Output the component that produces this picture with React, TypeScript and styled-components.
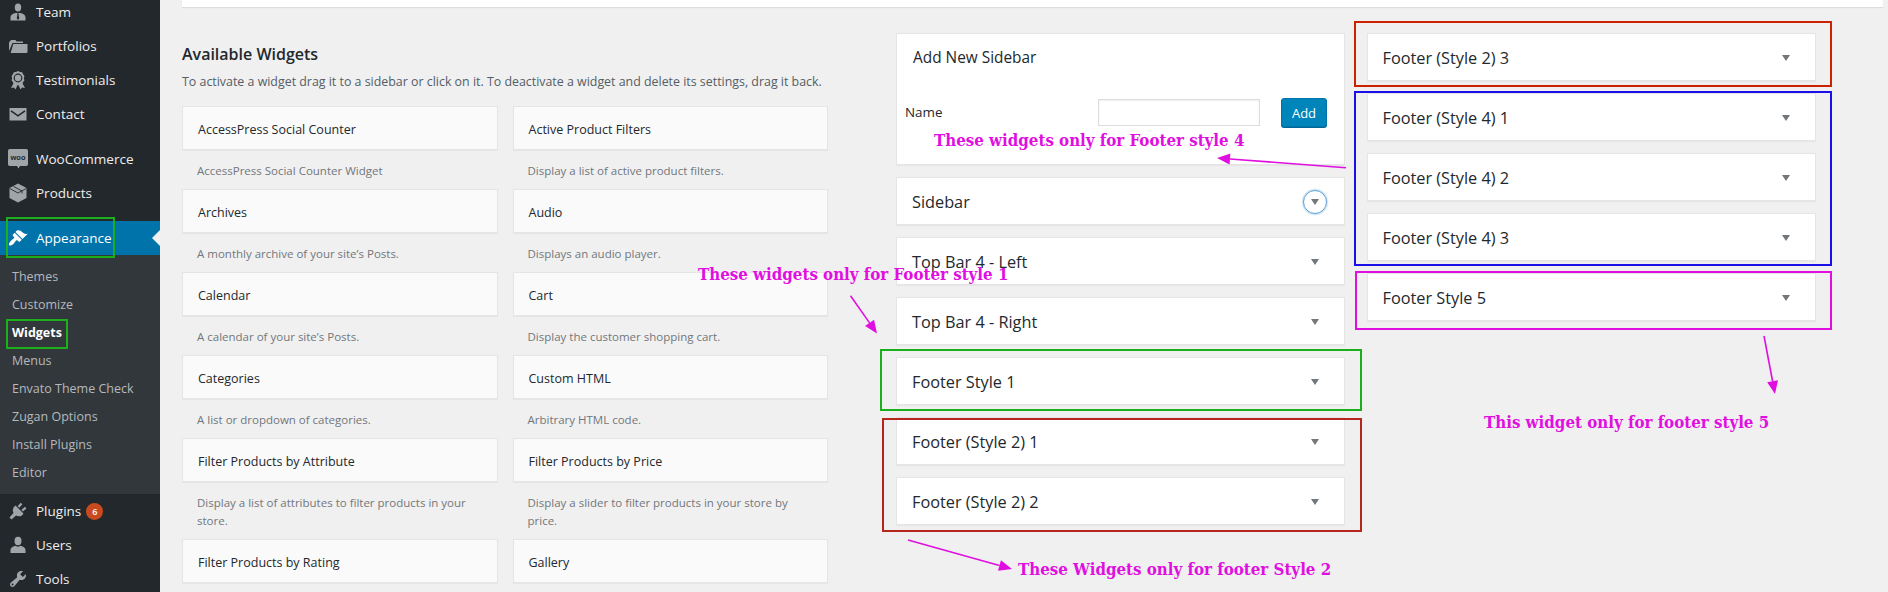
import React from "react";
import styled, { createGlobalStyle } from "styled-components";

const Global = createGlobalStyle`
  html, body { margin: 0; padding: 0; background: #f0f0f0; }
  * { box-sizing: border-box; }
`;

const Page = styled.div`
  position: relative;
  display: flex;
  width: 1888px;
  height: 592px;
  overflow: hidden;
  background: #f0f0f0;
  font-family: "Open Sans", "Liberation Sans", sans-serif;
  color: #23282d;
`;

/* ---------- admin menu ---------- */
const AdminMenu = styled.nav`
  flex: none;
  width: 160px;
  height: 592px;
  background: #23282d;
`;
const MenuGroup = styled.div<{ $offset?: number; $gap?: number }>`
  margin-top: ${(p) => p.$offset ?? 0}px;
  margin-bottom: ${(p) => p.$gap ?? 0}px;
`;
const MenuItem = styled.div<{ $active?: boolean }>`
  position: relative;
  display: flex;
  align-items: center;
  height: 34px;
  padding-left: 8px;
  font-size: 13.5px;
  color: ${(p) => (p.$active ? "#fff" : "#eee")};
  background: ${(p) => (p.$active ? "#0073aa" : "transparent")};
  ${(p) =>
    p.$active &&
    `&::after {
      content: "";
      position: absolute;
      right: 0;
      top: 50%;
      margin-top: -8px;
      border: 8px solid transparent;
      border-right-color: #f1f1f1;
      border-left-width: 0;
    }`}
`;
const MenuIcon = styled.svg<{ $active?: boolean }>`
  flex: none;
  width: 20px;
  height: 20px;
  margin-right: 8px;
  fill: ${(p) => (p.$active ? "#fff" : "#a0a5aa")};
`;
const Badge = styled.span`
  display: inline-flex;
  align-items: center;
  justify-content: center;
  width: 17px;
  height: 17px;
  margin-left: 5px;
  border-radius: 50%;
  background: #ca4a1f;
  color: #fff;
  font-size: 9px;
  font-weight: 600;
`;
const SubMenu = styled.div`
  padding: 8px 0 7px;
  background: #32373c;
`;
const SubItem = styled.div<{ $current?: boolean }>`
  height: 28px;
  padding-left: 12px;
  font-size: 12.5px;
  line-height: 27px;
  color: ${(p) => (p.$current ? "#fff" : "#b4b9be")};
  font-weight: ${(p) => (p.$current ? 700 : 400)};
`;

/* ---------- main ---------- */
const Main = styled.main`
  flex: 1;
  min-width: 0;
  padding: 0 5px 0 22px;
`;
const TopBar = styled.div`
  height: 7px;
  background: #fff;
  box-shadow: 0 1px 1px rgba(0, 0, 0, 0.08);
`;
const Columns = styled.div`
  display: flex;
  align-items: flex-start;
  margin-top: 26px;
`;
const Available = styled.section`
  flex: none;
  width: 646px;
  margin-right: 68px;
  padding-top: 9px;
`;
const Heading = styled.h2`
  margin: 0;
  font-size: 16px;
  font-weight: 600;
  line-height: 24px;
  color: #23282d;
`;
const Intro = styled.p`
  margin: 7px 0 0;
  font-size: 12.4px;
  line-height: 18px;
  white-space: nowrap;
  color: #555d66;
`;
const WidgetGrid = styled.div`
  display: grid;
  grid-template-columns: 1fr 1fr;
  column-gap: 15px;
  margin-top: 15px;
`;
const WidgetCell = styled.div``;
const WidgetCard = styled.div`
  height: 44px;
  padding: 0 15px;
  border: 1px solid #e5e5e5;
  background: #fafafa;
  box-shadow: 0 1px 1px rgba(0, 0, 0, 0.04);
  font-size: 12.5px;
  font-weight: 500;
  line-height: 45px;
  color: #23282d;
`;
const WidgetDesc = styled.p`
  margin: 0;
  padding: 12px 15px 9px;
  font-size: 11.5px;
  line-height: 18px;
  color: #72777c;
`;

const SidebarColumn = styled.section<{ $gap?: number }>`
  flex: none;
  display: flex;
  flex-direction: column;
  gap: 12px;
  width: 449px;
  margin-right: ${(p) => p.$gap ?? 0}px;
`;
const Card = styled.div`
  border: 1px solid #e5e5e5;
  background: #fff;
  box-shadow: 0 1px 1px rgba(0, 0, 0, 0.04);
`;
const AddCard = styled(Card)`
  height: 132px;
  padding-top: 13px;
`;
const AddTitle = styled.h3`
  margin: 0;
  padding-left: 16px;
  font-size: 15.4px;
  font-weight: 500;
  line-height: 22px;
`;
const AddForm = styled.div`
  display: flex;
  align-items: center;
  margin-top: 29px;
  padding: 0 17px 0 8px;
`;
const NameLabel = styled.label`
  flex: 1;
  padding-bottom: 2px;
  font-size: 13.4px;
  font-weight: 500;
`;
const NameInput = styled.input`
  width: 162px;
  height: 27px;
  padding: 0;
  border: 1px solid #ddd;
  background: #fff;
  box-shadow: inset 0 1px 2px rgba(0, 0, 0, 0.07);
`;
const AddButton = styled.button`
  width: 46px;
  height: 29px;
  margin-left: 21px;
  padding: 0;
  border: 1px solid #0073aa;
  border-radius: 3px;
  background: #0085ba;
  box-shadow: 0 1px 0 #006799;
  color: #fff;
  font-family: inherit;
  font-size: 13px;
`;
const SidebarCard = styled(Card)`
  display: flex;
  align-items: center;
  justify-content: space-between;
  height: 48px;
  padding: 1px 17px 0 15px;
`;
const SidebarTitle = styled.span`
  font-size: 16.3px;
  font-weight: 500;
`;
const Toggle = styled.span<{ $focus?: boolean }>`
  display: flex;
  align-items: center;
  justify-content: center;
  width: 24px;
  height: 24px;
  border-radius: 50%;
  border: ${(p) => (p.$focus ? "1px solid #5b9dd9" : "1px solid transparent")};
  box-shadow: ${(p) => (p.$focus ? "0 0 2px rgba(30, 140, 190, 0.8)" : "none")};
  &::before {
    content: "";
    border-style: solid;
    border-width: 6px 4px 0;
    border-color: #72777c transparent transparent;
  }
`;

/* ---------- annotations ---------- */
const Frame = styled.div<{ $x: number; $y: number; $w: number; $h: number; $c: string }>`
  position: absolute;
  left: ${(p) => p.$x}px;
  top: ${(p) => p.$y}px;
  width: ${(p) => p.$w}px;
  height: ${(p) => p.$h}px;
  border: 2px solid ${(p) => p.$c};
  pointer-events: none;
`;
const Note = styled.div<{ $x: number; $y: number }>`
  position: absolute;
  left: ${(p) => p.$x}px;
  top: ${(p) => p.$y}px;
  font-family: "DejaVu Serif Condensed", "DejaVu Serif", "Liberation Serif", serif;
  font-stretch: condensed;
  font-size: 16.75px;
  font-weight: 700;
  line-height: 22px;
  white-space: nowrap;
  color: #e00fe0;
`;
const ArrowLayer = styled.svg`
  position: absolute;
  left: 0;
  top: 0;
  width: 1888px;
  height: 592px;
  pointer-events: none;
`;

const dark = "#23282d";
const icons: Record<string, React.ReactNode> = {
  team: (
    <>
      <ellipse cx="10" cy="5.5" rx="3.2" ry="4" />
      <path d="M2.5 18.5v-3.2c0-2.6 2.6-3.9 5.2-4.4L10 11l2.3-.1c2.6.5 5.2 1.8 5.2 4.4v3.2H2.5z" />
      <path d="M9 11.5h2l-.4 1.6.7 3.2L10 18l-1.3-1.7.7-3.2z" fill={dark} />
    </>
  ),
  portfolio: (
    <>
      <path d="M1 15V6.500l2-2.500h4.500l1 1.500H15V7H4.500z" />
      <path d="M2.600 17 5.300 8H19.500v8.200l-.8.8z" />
    </>
  ),
  award: (
    <>
      <path d="M6 12.500 3 18l3-.6 1.600 2.200L9.400 15zM14 12.500 17 18l-3-.6-1.600 2.200L10.600 15z" />
      <path
        fillRule="evenodd"
        d="M10 1l2 1 2.200.3.9 2 1.300 1.700-.5 2.200.5 2.200-1.300 1.700-.9 2-2.200.3-2 1-2-1-2.200-.3-.9-2-1.300-1.700.5-2.200-.5-2.200 1.300-1.700.9-2L8 2zM10 3.600a4.400 4.400 0 1 0 0 8.800 4.400 4.400 0 0 0 0-8.800z"
      />
      <circle cx="10" cy="8" r="3.2" />
    </>
  ),
  mail: (
    <>
      <rect x="1.500" y="4" width="17" height="12.500" />
      <path d="M3 6.800l7 5 7-5" fill="none" stroke={dark} strokeWidth="1.600" />
    </>
  ),
  woo: (
    <>
      <path d="M1.800 0h16.400A1.800 1.800 0 0 1 20 1.800v13.400a1.800 1.800 0 0 1-1.800 1.800H12l-1.500 2.500L9 17H1.800A1.800 1.800 0 0 1 0 15.200V1.800A1.800 1.800 0 0 1 1.800 0z" />
      <text x="10" y="11" textAnchor="middle" fontSize="7.500" fontWeight="700" fontFamily="'Liberation Sans', sans-serif" fill={dark}>
        woo
      </text>
    </>
  ),
  box: (
    <>
      <path d="M10 .5 18.500 5v10L10 19.500 1.500 15V5z" />
      <path d="M1.800 5.500 10 10l8.200-4.500M5.500 3.400 14 8v2.500" fill="none" stroke={dark} strokeWidth=".9" />
    </>
  ),
  brush: (
    <>
      <path d="M14.480 11.060L7.410 3.990l1.500-1.500c.5-.56 2.300-.47 3.510.32 1.210.8 1.430 1.280 2.910 2.100 1.180.64 2.450 1.260 4.450.85z" />
      <path d="M13.770 11.770L6.700 4.700 4.930 6.470c-.39.39-.39 1.020 0 1.410l1.060 1.060c.39.39.39 1.030 0 1.420-.6.6-1.430 1.110-2.210 1.690-.35.26-.7.53-1.010.84C1.400 14.300.3 16.300 1.200 17.300c1 .9 3-.3 4.380-1.600.32-.3.57-.65.84-1.010.58-.78 1.090-1.610 1.690-2.210.39-.39 1.030-.39 1.420 0l1.060 1.060c.39.39 1.020.39 1.410 0z" />
    </>
  ),
  plug: (
    <>
      <path d="M7.500 4.500l8 8c-1.500 3-5 3.500-7.500 2L3.500 18.500l-2-2 4-4.500C4 9.500 5 6.500 7.500 4.500z" />
      <path d="M10.500 6 13.500 2.500M14.200 9.700 17.700 6.700" stroke="#a0a5aa" strokeWidth="2.200" fill="none" />
    </>
  ),
  user: (
    <>
      <ellipse cx="10" cy="6" rx="3.500" ry="4.200" />
      <path d="M2.500 18v-3c0-2.500 3.300-4 5.300-4.300.6.7 1.400 1 2.200 1s1.600-.3 2.200-1c2 .3 5.300 1.800 5.300 4.300v3z" />
    </>
  ),
  wrench: (
    <path
      fillRule="evenodd"
      d="M16.680 9.770c-1.340 1.340-3.300 1.670-4.950.99l-5.410 6.520c-.99.99-2.590.99-3.580 0s-.99-2.590 0-3.570l6.520-5.420c-.68-1.650-.35-3.610.99-4.950 1.280-1.280 3.120-1.620 4.720-1.060l-2.890 2.890 2.820 2.820 2.860-2.870c.53 1.580.18 3.390-1.080 4.650zM3.810 16.210c.4.39 1.040.39 1.430 0 .4-.4.4-1.040 0-1.430-.39-.4-1.030-.4-1.430 0-.39.39-.39 1.030 0 1.430z"
    />
  ),
};

const Item = ({ icon, label, active, badge }: { icon: string; label: string; active?: boolean; badge?: string }) => (
  <MenuItem $active={active}>
    <MenuIcon viewBox="0 0 20 20" $active={active}>
      {icons[icon]}
    </MenuIcon>
    {label}
    {badge && <Badge>{badge}</Badge>}
  </MenuItem>
);

const subs = ["Themes", "Customize", "Widgets", "Menus", "Envato Theme Check", "Zugan Options", "Install Plugins", "Editor"];

const widgets: [string, string][] = [
  ["AccessPress Social Counter", "AccessPress Social Counter Widget"],
  ["Active Product Filters", "Display a list of active product filters."],
  ["Archives", "A monthly archive of your site’s Posts."],
  ["Audio", "Displays an audio player."],
  ["Calendar", "A calendar of your site’s Posts."],
  ["Cart", "Display the customer shopping cart."],
  ["Categories", "A list or dropdown of categories."],
  ["Custom HTML", "Arbitrary HTML code."],
  ["Filter Products by Attribute", "Display a list of attributes to filter products in your store."],
  ["Filter Products by Price", "Display a slider to filter products in your store by price."],
  ["Filter Products by Rating", ""],
  ["Gallery", ""],
];

const firstColumn = ["Sidebar", "Top Bar 4 - Left", "Top Bar 4 - Right", "Footer Style 1", "Footer (Style 2) 1", "Footer (Style 2) 2"];
const secondColumn = ["Footer (Style 2) 3", "Footer (Style 4) 1", "Footer (Style 4) 2", "Footer (Style 4) 3", "Footer Style 5"];

const magenta = "#e00fe0";
const Arrow = ({ x1, y1, x2, y2 }: { x1: number; y1: number; x2: number; y2: number }) => {
  const a = Math.atan2(y2 - y1, x2 - x1);
  const len = 13;
  const w = 5.5;
  const bx = x2 - len * Math.cos(a);
  const by = y2 - len * Math.sin(a);
  const nx = -Math.sin(a) * w;
  const ny = Math.cos(a) * w;
  return (
    <>
      <line x1={x1} y1={y1} x2={bx} y2={by} stroke={magenta} strokeWidth="1.6" />
      <polygon points={`${x2},${y2} ${bx + nx},${by + ny} ${bx - nx},${by - ny}`} fill={magenta} />
    </>
  );
};

export default function App() {
  return (
    <Page>
      <Global />
      <AdminMenu>
        <MenuGroup $offset={-5} $gap={11}>
          <Item icon="team" label="Team" />
          <Item icon="portfolio" label="Portfolios" />
          <Item icon="award" label="Testimonials" />
          <Item icon="mail" label="Contact" />
        </MenuGroup>
        <MenuGroup $gap={11}>
          <Item icon="woo" label="WooCommerce" />
          <Item icon="box" label="Products" />
        </MenuGroup>
        <MenuGroup>
          <Item icon="brush" label="Appearance" active />
          <SubMenu>
            {subs.map((s) => (
              <SubItem key={s} $current={s === "Widgets"}>
                {s}
              </SubItem>
            ))}
          </SubMenu>
          <Item icon="plug" label="Plugins" badge="6" />
          <Item icon="user" label="Users" />
          <Item icon="wrench" label="Tools" />
        </MenuGroup>
      </AdminMenu>

      <Main>
        <TopBar />
        <Columns>
          <Available>
            <Heading>Available Widgets</Heading>
            <Intro>To activate a widget drag it to a sidebar or click on it. To deactivate a widget and delete its settings, drag it back.</Intro>
            <WidgetGrid>
              {widgets.map(([title, desc]) => (
                <WidgetCell key={title}>
                  <WidgetCard>{title}</WidgetCard>
                  <WidgetDesc>{desc}</WidgetDesc>
                </WidgetCell>
              ))}
            </WidgetGrid>
          </Available>

          <SidebarColumn $gap={21.5}>
            <AddCard>
              <AddTitle>Add New Sidebar</AddTitle>
              <AddForm>
                <NameLabel>Name</NameLabel>
                <NameInput />
                <AddButton>Add</AddButton>
              </AddForm>
            </AddCard>
            {firstColumn.map((t) => (
              <SidebarCard key={t}>
                <SidebarTitle>{t}</SidebarTitle>
                <Toggle $focus={t === "Sidebar"} />
              </SidebarCard>
            ))}
          </SidebarColumn>

          <SidebarColumn>
            {secondColumn.map((t) => (
              <SidebarCard key={t}>
                <SidebarTitle>{t}</SidebarTitle>
                <Toggle />
              </SidebarCard>
            ))}
          </SidebarColumn>
        </Columns>
      </Main>

      <Frame $x={6} $y={217} $w={109} $h={41} $c="#1bb01b" />
      <Frame $x={6} $y={319} $w={62} $h={30} $c="#1bb01b" />
      <Frame $x={880} $y={349} $w={482} $h={62} $c="#1bb01b" />
      <Frame $x={882} $y={418} $w={480} $h={114} $c="#b5271c" />
      <Frame $x={1354} $y={21} $w={478} $h={66} $c="#cc2200" />
      <Frame $x={1354} $y={91} $w={478} $h={175} $c="#1a0fe8" />
      <Frame $x={1355} $y={271} $w={477} $h={59} $c={magenta} />

      <Note $x={934} $y={129}>These widgets only for Footer style 4</Note>
      <Note $x={698} $y={263}>These widgets only for Footer style 1</Note>
      <Note $x={1018} $y={558}>These Widgets only for footer Style 2</Note>
      <Note $x={1484} $y={411}>This widget only for footer style 5</Note>

      <ArrowLayer viewBox="0 0 1888 592">
        <Arrow x1={1346} y1={167.7} x2={1217} y2={158} />
        <Arrow x1={850.5} y1={295.7} x2={877} y2={333.5} />
        <Arrow x1={908} y1={540} x2={1012} y2={569} />
        <Arrow x1={1764} y1={336} x2={1775} y2={394} />
      </ArrowLayer>
    </Page>
  );
}
